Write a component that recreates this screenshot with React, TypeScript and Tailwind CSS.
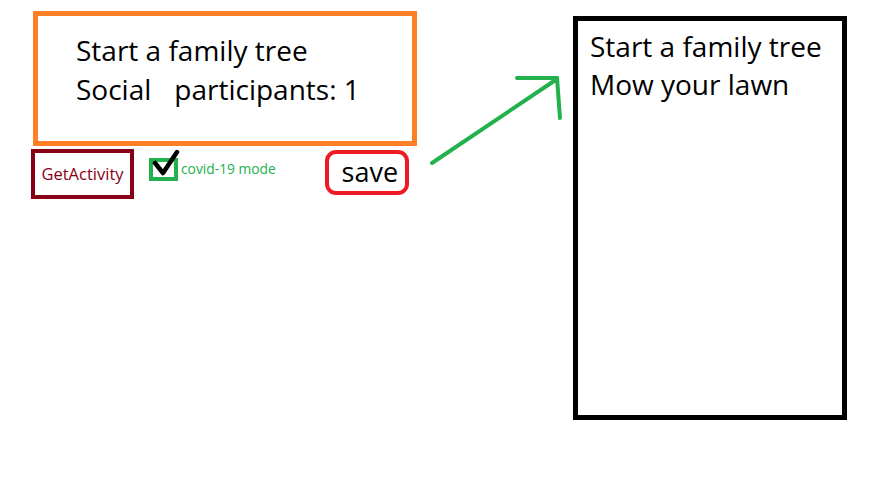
export default function App() {
  return (
    <div className="relative w-[874px] h-[486px] bg-white overflow-hidden" style={{ fontFamily: '"Open Sans", "Noto Sans", sans-serif' }}>
      <div className="flex items-start pt-[11px] pl-[33px]">
        {/* left column */}
        <div className="flex flex-col w-[384px]">
          <div className="h-[135px] border-[5px] border-[#ff7f27] pl-[38px] pt-[15px] text-[28px] leading-[39px] text-black">
            <div>Start a family tree</div>
            <div className="flex">
              <span>Social</span>
              <span className="ml-[23px]">participants: 1</span>
            </div>
          </div>
          <div className="flex items-start mt-[3px] -ml-[2px]">
            <button className="w-[103px] h-[50px] border-[4px] border-[#880015] text-[#880015] text-[16.5px] flex items-center justify-center">
              GetActivity
            </button>
            <label className="relative flex items-center ml-[15px] mt-[9px]">
              <span className="w-[29px] h-[23px] border-[4px] border-[#22b14c] bg-white" />
              <svg className="absolute left-[2px] -top-[9px]" width="30" height="32" viewBox="0 0 30 32">
                <polyline points="4,14 12,24 26,3" fill="none" stroke="#000" strokeWidth="4.5" strokeLinecap="round" strokeLinejoin="round" />
              </svg>
              <span className="ml-[3px] text-[13.8px] text-[#22b14c]">covid-19 mode</span>
            </label>
            <button className="ml-[49px] mt-[1px] w-[84px] h-[45px] border-[4px] border-[#ed1c24] rounded-[11px] text-[27px] text-black flex items-center justify-center pl-[6px]">
              save
            </button>
          </div>
        </div>
        {/* right panel */}
        <div className="ml-[156px] mt-[5px] w-[274px] h-[404px] border-[5px] border-black pl-[12px] pt-[6px] text-[28px] leading-[38px] text-black">
          <div>Start a family tree</div>
          <div>Mow your lawn</div>
        </div>
      </div>
      {/* arrow */}
      <svg className="absolute left-0 top-0 pointer-events-none" width="874" height="486">
        <g fill="none" stroke="#22b14c" strokeWidth="4" strokeLinecap="round">
          <line x1="432" y1="163" x2="557" y2="79" />
          <line x1="517" y1="78" x2="557" y2="78" />
          <line x1="557" y1="78" x2="560" y2="118" />
        </g>
      </svg>
    </div>
  );
}
